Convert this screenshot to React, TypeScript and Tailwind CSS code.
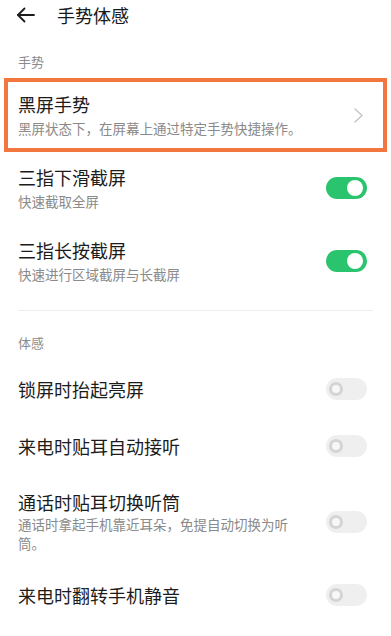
import React from "react";

const font = { fontFamily: '"Noto Sans CJK SC", "Noto Sans", sans-serif' };

function ToggleOn() {
  return (
    <div className="relative w-[41px] h-[22px] rounded-full bg-[#2bc46e] shrink-0">
      <div className="absolute right-[4px] top-[3px] w-[16px] h-[16px] rounded-full bg-white" />
    </div>
  );
}

function ToggleOff() {
  return (
    <div className="relative w-[41px] h-[22px] rounded-full bg-[#efefef] shrink-0">
      <div className="absolute left-[3px] top-[4px] w-[14px] h-[14px] rounded-full border-[3px] border-[#d4d4d4] bg-[#f7f7f7]" />
    </div>
  );
}

function TwoLineRow({ title, sub, on }: { title: string; sub: string; on: boolean }) {
  return (
    <div className="flex items-center pl-[18px] pr-[24px] pt-[13px] pb-[14px]">
      <div className="flex-1">
        <div className="text-[18px] leading-[24px] text-[#1c1c1c]">{title}</div>
        <div className="mt-[2px] text-[13.5px] leading-[20px] text-[#8a8a8a]">{sub}</div>
      </div>
      {on ? <ToggleOn /> : <ToggleOff />}
    </div>
  );
}

function SingleRow({ title }: { title: string }) {
  return (
    <div className="flex items-center h-[57px] pl-[18px] pr-[24px]">
      <div className="flex-1 text-[18px] leading-[24px] text-[#1c1c1c]">{title}</div>
      <ToggleOff />
    </div>
  );
}

export default function App() {
  return (
    <div className="w-[391px] h-[636px] bg-white overflow-hidden" style={font}>
      {/* Top bar */}
      <div className="flex items-center h-[30px] pl-[16px]">
        <svg width="19" height="16" viewBox="0 0 19 16" fill="none" stroke="#1c1c1c" strokeWidth="1.8" strokeLinecap="round" strokeLinejoin="round">
          <path d="M18 8H2" />
          <path d="M8.5 1.5L2 8l6.5 6.5" />
        </svg>
        <div className="ml-[22px] text-[18px] leading-[24px] text-[#1a1a1a]">手势体感</div>
      </div>

      {/* Section 手势 */}
      <div className="pt-[22px] pl-[18px] text-[13px] leading-[20px] text-[#8c8c8c]">手势</div>

      <div className="mt-[6px] mx-[4px] border-[4px] border-[#f2773f] flex items-center pl-[10px] pr-[20px] pt-[10px] pb-[10px]">
        <div className="flex-1">
          <div className="text-[18px] leading-[24px] text-[#1c1c1c]">黑屏手势</div>
          <div className="mt-[2px] text-[13.5px] leading-[20px] text-[#8a8a8a]">黑屏状态下，在屏幕上通过特定手势快捷操作。</div>
        </div>
        <svg width="9" height="15" viewBox="0 0 9 15" fill="none" stroke="#c4c4c4" strokeWidth="1.4" strokeLinecap="round" strokeLinejoin="round">
          <path d="M1 1l7 6.5L1 14" />
        </svg>
      </div>

      <TwoLineRow title="三指下滑截屏" sub="快速截取全屏" on />
      <TwoLineRow title="三指长按截屏" sub="快速进行区域截屏与长截屏" on />

      <div className="mt-[12px] mx-[18px] h-px bg-[#ededed]" />

      {/* Section 体感 */}
      <div className="pt-[22px] pl-[18px] text-[13px] leading-[20px] text-[#8c8c8c]">体感</div>
      <div className="mt-[7px]">
        <SingleRow title="锁屏时抬起亮屏" />
        <SingleRow title="来电时贴耳自动接听" />
        <div className="flex items-center pl-[18px] pr-[24px] pt-[16px] pb-[13px]">
          <div className="flex-1">
            <div className="text-[18px] leading-[24px] text-[#1c1c1c]">通话时贴耳切换听筒</div>
            <div className="mt-[1px] max-w-[276px] text-[13.5px] leading-[19px] text-[#8a8a8a]">
              通话时拿起手机靠近耳朵，免提自动切换为听筒。
            </div>
          </div>
          <ToggleOff />
        </div>
        <SingleRow title="来电时翻转手机静音" />
      </div>
    </div>
  );
}
